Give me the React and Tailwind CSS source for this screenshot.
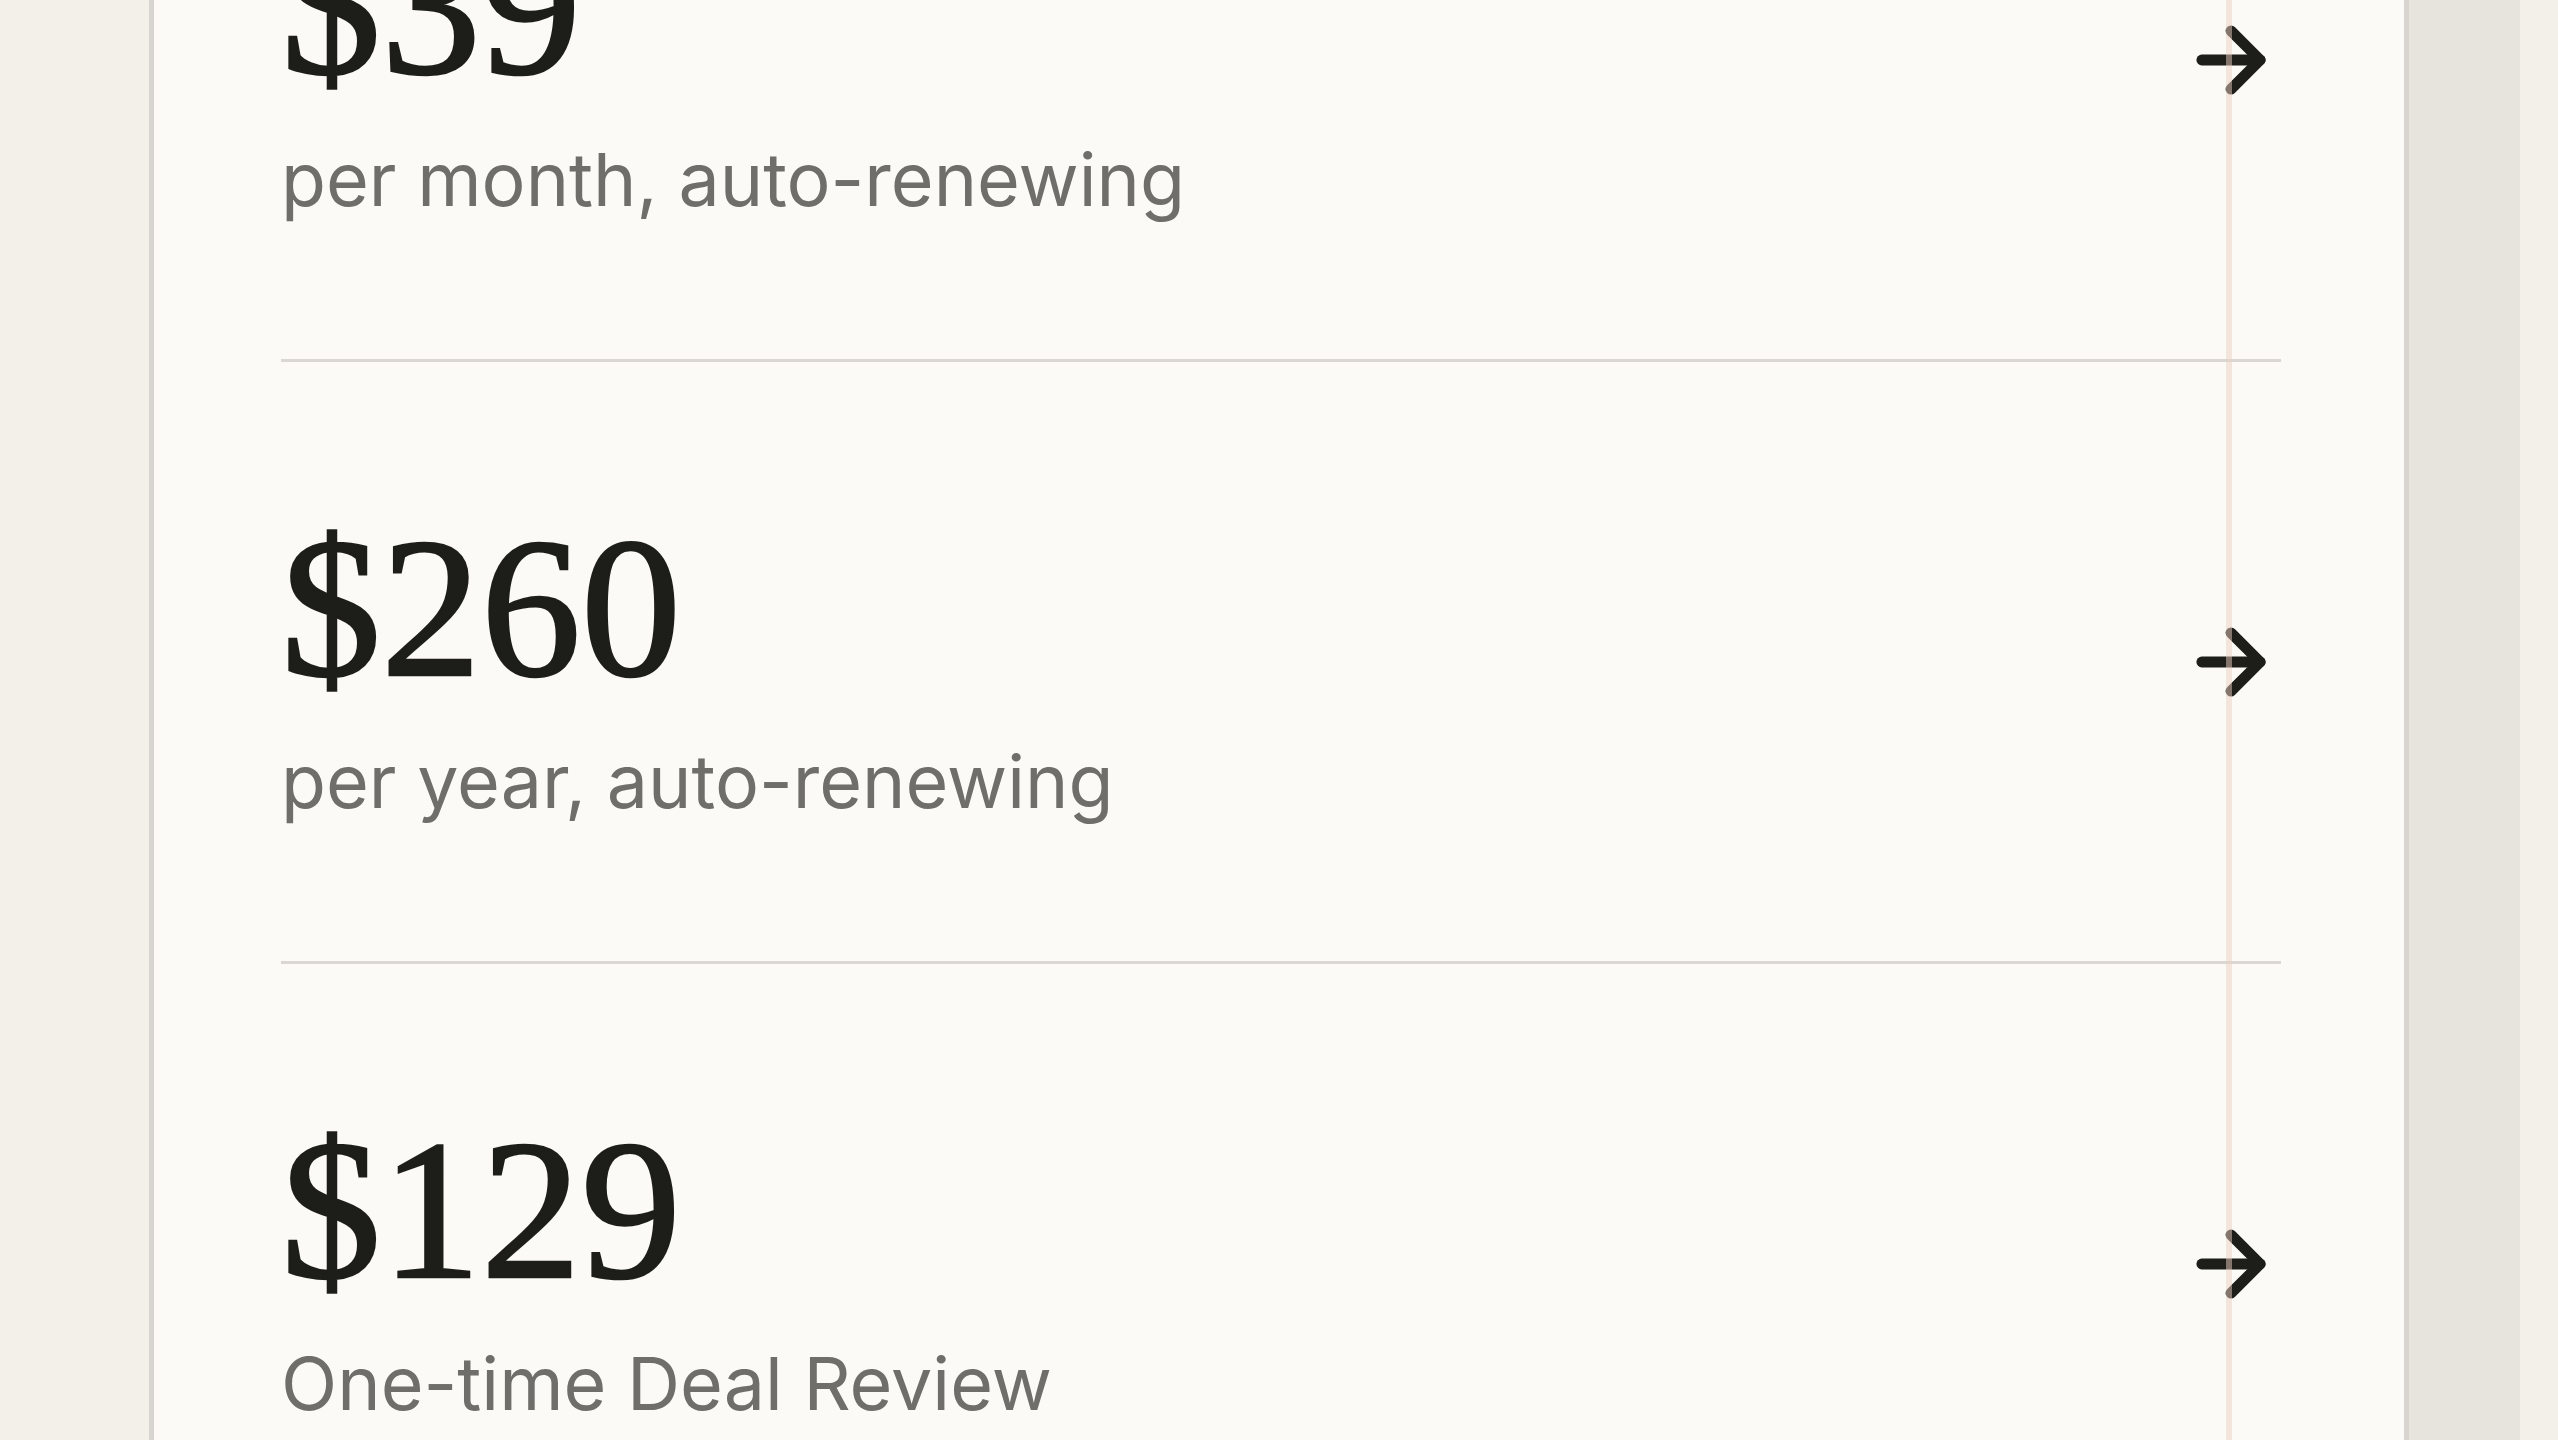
import { ArrowRight } from "lucide-react";

const plans = [
  { price: "$39", note: "per month, auto-renewing" },
  { price: "$260", note: "per year, auto-renewing" },
  { price: "$129", note: "One-time Deal Review" },
];

const PlanRow = ({ price, note }) => (
  <button className="w-full h-[602px] flex justify-between items-center border-b-[3px] border-[#dbd8d3] text-left">
    <div className="self-start pt-[146px] flex flex-col">
      <span className="text-[200px] leading-none text-[#1d1d19] font-['Liberation_Serif',serif] [-webkit-text-stroke:2.5px_#1d1d19]">{price}</span>
      <span className="mt-[30px] text-[73.5px] leading-[88px] text-[#6f6e6a] font-['Inter',sans-serif]">{note}</span>
    </div>
    <ArrowRight size={100} strokeWidth={2.6} className="text-[#1d1d19] shrink-0" />
  </button>
);

export default function App() {
  return (
    <div className="h-screen overflow-hidden bg-[#f3efe9] flex pl-[149px]">
      {/* pricing card, scrolled down */}
      <div className="relative w-[2260px] shrink-0 bg-[#fbfaf7] border-x-[5px] border-[#d8d5d0]">
        <div className="-mt-[240px] pl-[127px] pr-[123px]">
          {plans.map((p) => (
            <PlanRow key={p.price} {...p} />
          ))}
        </div>
        <div className="absolute top-0 bottom-0 left-[2072px] w-[6px] bg-[#eccfc2]/50 pointer-events-none" />
      </div>
      <div className="w-[111px] shrink-0 bg-[#e7e3dd]" />
    </div>
  );
}
